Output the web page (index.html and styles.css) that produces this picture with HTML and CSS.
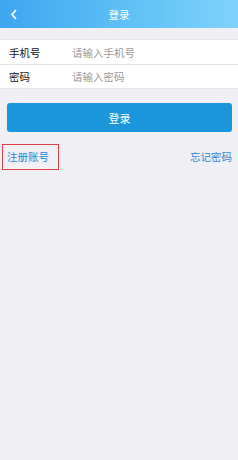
FILE: index.html
```html
<!DOCTYPE html>
<html lang="zh">
<head>
    <meta charset="UTF-8">
    <meta name="viewport" content="width=device-width, initial-scale=1.0">
    <title>登录</title>
    <link rel="stylesheet" href="styles.css">
</head>
<body>
    <div class="nav-bar">
        <span class="back-btn">
            <svg width="8" height="11" viewBox="0 0 8 11"><path d="M6 1 L2 5.5 L6 10" fill="none" stroke="#fff" stroke-width="1.8"/></svg>
        </span>
        <span class="nav-title">登录</span>
    </div>

    <div class="form-group">
        <div class="form-row">
            <span class="form-label">手机号</span>
            <span class="form-input">请输入手机号</span>
        </div>
        <div class="form-row">
            <span class="form-label">密码</span>
            <span class="form-input">请输入密码</span>
        </div>
    </div>

    <div class="login-btn">登录</div>

    <div class="links">
        <span class="link register">注册账号</span>
        <span class="link">忘记密码</span>
    </div>
</body>
</html>
```

FILE: styles.css
```css
* {
    margin: 0;
    padding: 0;
    box-sizing: border-box;
}

body {
    font-family: "Noto Sans CJK SC", "Noto Sans", sans-serif;
    background: #efeff4;
    width: 238px;
    min-height: 460px;
}

.nav-bar {
    height: 28px;
    background: linear-gradient(90deg, #3ea6ef 0%, #62c3f6 60%, #80d2fb 100%);
    display: flex;
    align-items: center;
    justify-content: center;
    position: relative;
}

.back-btn {
    position: absolute;
    left: 10px;
    top: 9px;
    display: flex;
}

.nav-title {
    color: #fff;
    font-size: 10.5px;
}

.form-group {
    margin-top: 11px;
    background: #fff;
    border-top: 1px solid #e6e6ea;
    border-bottom: 1px solid #e6e6ea;
}

.form-row {
    height: 24px;
    display: flex;
    align-items: center;
    font-size: 10.5px;
}

.form-row + .form-row {
    border-top: 1px solid #e2e2e6;
}

.form-label {
    width: 72px;
    padding-left: 9px;
    color: #111;
}

.form-input {
    color: #9a9a9a;
}

.login-btn {
    margin: 14px 6px 0 7px;
    height: 29px;
    border-radius: 3px;
    background: #1b96dd;
    color: #fff;
    font-size: 11px;
    display: flex;
    align-items: center;
    justify-content: center;
}

.links {
    margin-top: 12px;
    padding: 0 6px 0 2px;
    display: flex;
    justify-content: space-between;
    align-items: center;
}

.link {
    color: #2a86d6;
    font-size: 10.5px;
    line-height: 24px;
}

.register {
    border: 1px solid #e4404a;
    padding: 0 9px 0 4px;
}
```
